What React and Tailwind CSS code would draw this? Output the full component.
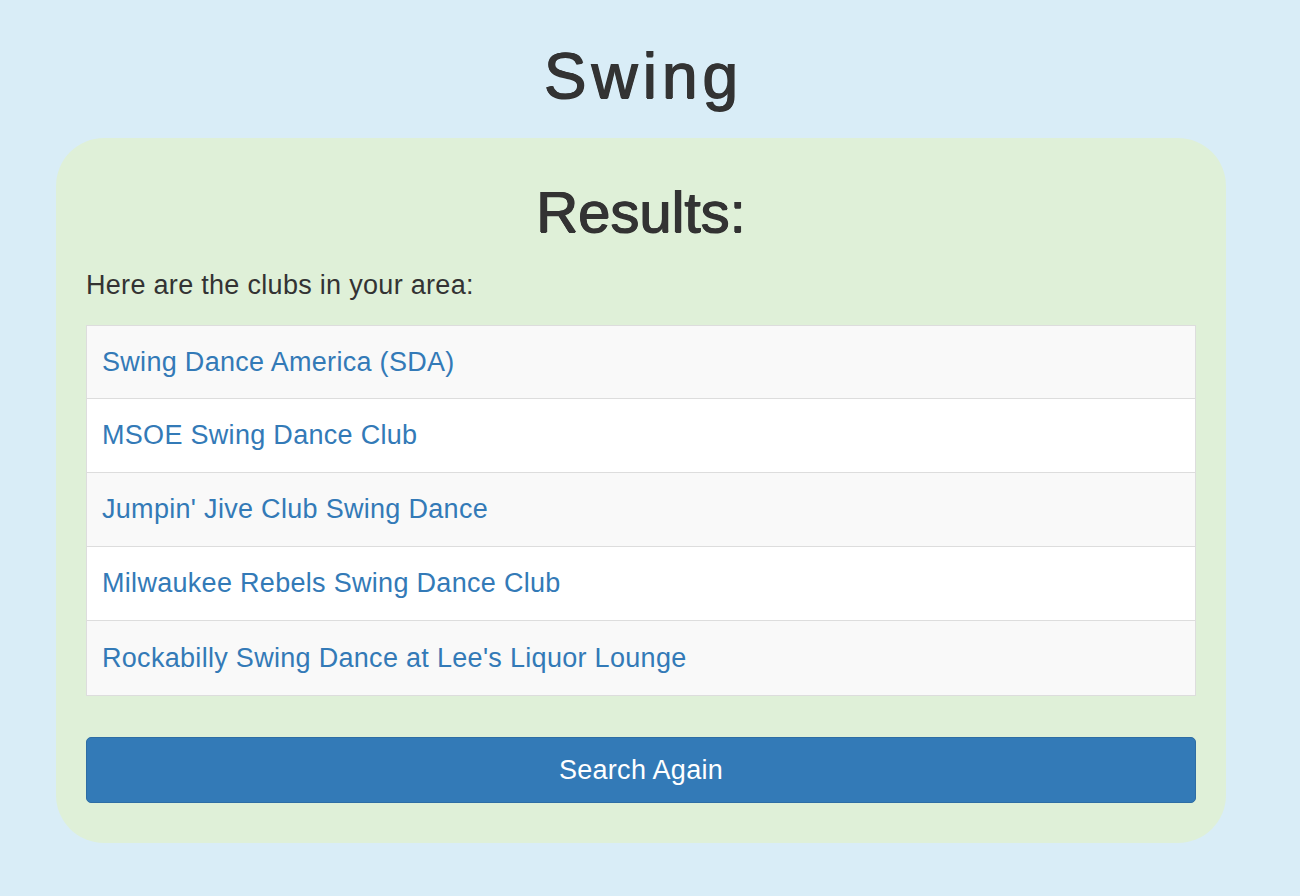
export default function App() {
  const clubs = [
    "Swing Dance America (SDA)",
    "MSOE Swing Dance Club",
    "Jumpin' Jive Club Swing Dance",
    "Milwaukee Rebels Swing Dance Club",
    "Rockabilly Swing Dance at Lee's Liquor Lounge",
  ];
  return (
    <div
      className="min-h-[896px] bg-[#d9edf7] pl-[56px] text-[#333]"
      style={{ fontFamily: '"Liberation Sans", Arial, sans-serif' }}
    >
      <div className="w-[1170px]">
        <h1 className="pt-[36px] h-[114px] pl-[5px] text-center text-[64px] leading-[80px] tracking-[5px] [text-shadow:0.7px_0_0_#333,-0.7px_0_0_#333,0_0.5px_0_#333]">
          Swing
        </h1>
        <div className="mt-[24px] bg-[#dff0d8] rounded-[48px] px-[30px] pt-[38px] pb-[40px]">
          <h2 className="text-center text-[58px] leading-[72px] [text-shadow:0.7px_0_0_#333,-0.7px_0_0_#333,0_0.5px_0_#333]">
            Results:
          </h2>
          <p className="mt-[21px] text-[27px] leading-[32px] tracking-[0.3px]">
            Here are the clubs in your area:
          </p>
          <div className="mt-[24px] border border-[#ddd] divide-y divide-[#ddd]">
            {clubs.map((c, i) => (
              <div
                key={c}
                className={`flex items-center px-[15px] text-[27px] tracking-[0.3px] ${
                  i === 0 ? "h-[73px]" : "h-[74px]"
                } ${i % 2 === 0 ? "bg-[#f9f9f9]" : "bg-white"}`}
              >
                <a href="#" className="text-[#337ab7]">
                  {c}
                </a>
              </div>
            ))}
          </div>
          <button className="mt-[41px] w-full h-[66px] bg-[#337ab7] border border-[#2e6da4] rounded-[5px] text-white text-[27px] tracking-[0.3px]">
            Search Again
          </button>
        </div>
      </div>
    </div>
  );
}
